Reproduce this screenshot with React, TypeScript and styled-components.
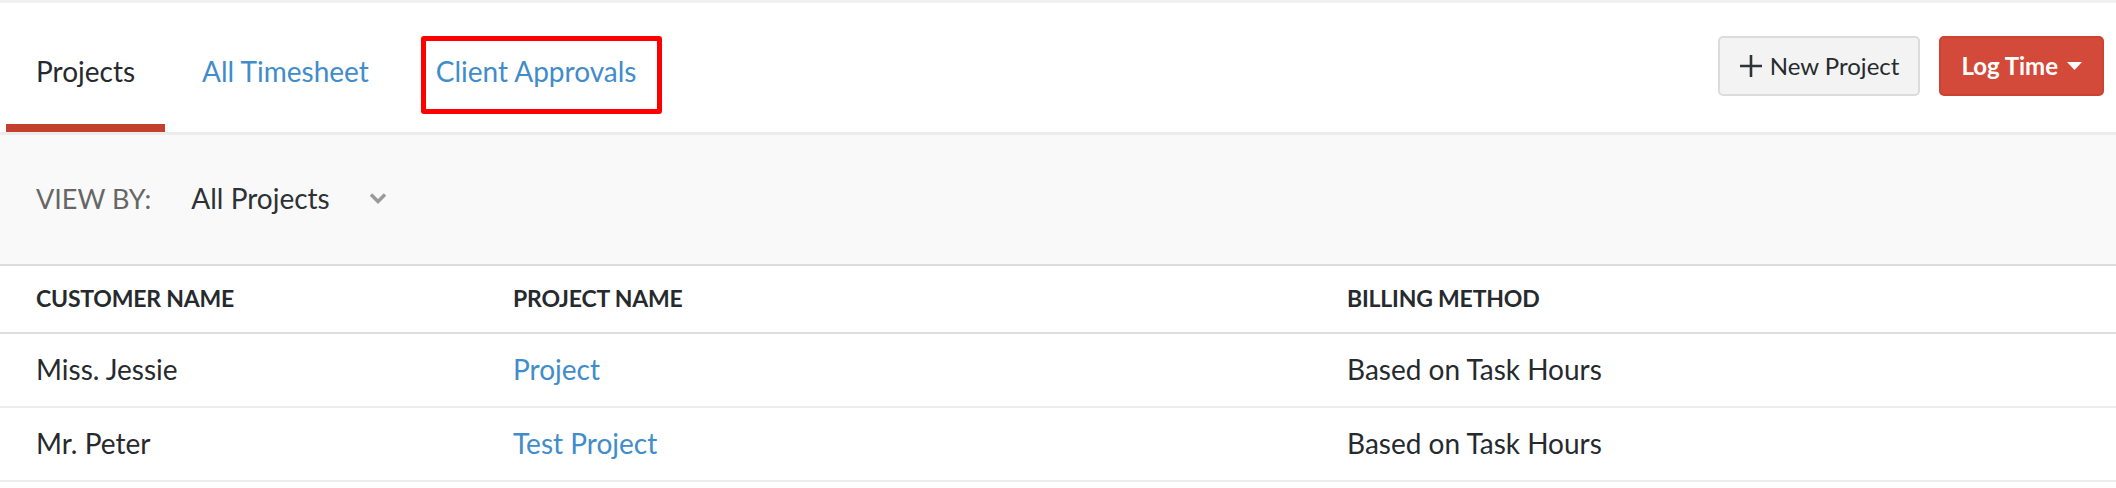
import React from 'react';
import styled, { createGlobalStyle } from 'styled-components';

const GlobalStyle = createGlobalStyle`
  body {
    margin: 0;
    background: #ffffff;
    font-family: Lato, "Open Sans", sans-serif;
    color: #262a2e;
  }
`;

const tabs = [
  { label: 'Projects', active: true, highlighted: false },
  { label: 'All Timesheet', active: false, highlighted: false },
  { label: 'Client Approvals', active: false, highlighted: true },
];

const projects = [
  { id: 1, customer: 'Miss. Jessie', project: 'Project', billing: 'Based on Task Hours' },
  { id: 2, customer: 'Mr. Peter', project: 'Test Project', billing: 'Based on Task Hours' },
];

const PlusIcon = () => (
  <svg width="24" height="24" viewBox="0 0 24 24" fill="none">
    <path d="M12 1v22M1 12h22" stroke="#2f3336" strokeWidth="2.6" />
  </svg>
);

const CaretIcon = () => (
  <svg width="15" height="8" viewBox="0 0 15 8">
    <path d="M0 0h15L7.5 8z" fill="#ffffff" />
  </svg>
);

const ChevronIcon = () => (
  <svg width="18" height="12" viewBox="0 0 18 12" fill="none">
    <path d="M2 2.5l7 7 7-7" stroke="#9a9a9a" strokeWidth="3.4" />
  </svg>
);

export default function App() {
  return (
    <>
      <GlobalStyle />
      <Page>
        <TabBar>
          <Tabs>
            {tabs.map((tab) => (
              <Tab key={tab.label} $active={tab.active}>
                {tab.label}
                {tab.highlighted && <Highlight />}
              </Tab>
            ))}
          </Tabs>
          <Actions>
            <Button>
              <PlusIcon />
              New Project
            </Button>
            <Button $primary>
              Log Time
              <CaretIcon />
            </Button>
          </Actions>
        </TabBar>

        <FilterBar>
          <FilterLabel>VIEW BY:</FilterLabel>
          <FilterSelect>
            All Projects
            <ChevronIcon />
          </FilterSelect>
        </FilterBar>

        <Table>
          <HeaderRow>
            <HeaderCell>CUSTOMER NAME</HeaderCell>
            <HeaderCell>PROJECT NAME</HeaderCell>
            <HeaderCell>BILLING METHOD</HeaderCell>
          </HeaderRow>
          {projects.map((p) => (
            <Row key={p.id}>
              <Cell>{p.customer}</Cell>
              <Cell>
                <ProjectLink href="#">{p.project}</ProjectLink>
              </Cell>
              <Cell>{p.billing}</Cell>
            </Row>
          ))}
        </Table>
      </Page>
    </>
  );
}

// Styled Components Definitions
const Page = styled.div`
  width: 2116px;
  border-top: 3px solid #f1f1f1;
`;

const TabBar = styled.div`
  height: 129px;
  display: flex;
  justify-content: space-between;
  border-bottom: 3px solid #ececec;
`;

const Tabs = styled.div`
  display: flex;
  gap: 7px;
  padding-left: 6px;
`;

const Tab = styled.div<{ $active?: boolean }>`
  position: relative;
  display: flex;
  align-items: center;
  padding: 6px 30px 0;
  font-size: 28px;
  color: ${(p) => (p.$active ? '#262a2e' : '#418cca')};
  box-shadow: ${(p) => (p.$active ? 'inset 0 -8px 0 #c3402e' : 'none')};
  cursor: pointer;
`;

const Highlight = styled.span`
  position: absolute;
  left: 15px;
  right: 4px;
  top: 33px;
  bottom: 18px;
  border: 5px solid #ff0000;
  border-radius: 3px;
`;

const Actions = styled.div`
  display: flex;
  align-items: center;
  gap: 19px;
  padding: 0 12px 4px 0;
`;

const Button = styled.button<{ $primary?: boolean }>`
  height: 60px;
  display: flex;
  align-items: center;
  gap: ${(p) => (p.$primary ? '9px' : '7px')};
  padding: 0 ${(p) => (p.$primary ? '20px' : '19px')};
  font-family: Lato, "Open Sans", sans-serif;
  font-size: 24px;
  font-weight: ${(p) => (p.$primary ? 700 : 400)};
  color: ${(p) => (p.$primary ? '#ffffff' : '#262a2e')};
  background: ${(p) => (p.$primary ? '#d44a3a' : '#f3f3f3')};
  border: 2px solid ${(p) => (p.$primary ? '#cc4334' : '#dcdcdc')};
  border-radius: 5px;
  cursor: pointer;
`;

const FilterBar = styled.div`
  height: 126px;
  display: flex;
  align-items: center;
  padding: 0 0 3px 36px;
  background: #f9f9f9;
  border-bottom: 2px solid #dcdcdc;
`;

const FilterLabel = styled.span`
  font-size: 27px;
  color: #666666;
  margin-right: 40px;
`;

const FilterSelect = styled.div`
  display: flex;
  align-items: center;
  gap: 39px;
  font-size: 28px;
  color: #2e3236;
`;

const Table = styled.div`
  display: flex;
  flex-direction: column;
`;

const HeaderRow = styled.div`
  display: grid;
  grid-template-columns: 477px 834px 1fr;
  height: 63px;
  padding-bottom: 3px;
  align-items: center;
  border-bottom: 2px solid #dedede;
`;

const HeaderCell = styled.div`
  padding-left: 36px;
  font-size: 23px;
  font-weight: 700;
  letter-spacing: -0.2px;
  color: #262a2e;
`;

const Row = styled.div`
  display: grid;
  grid-template-columns: 477px 834px 1fr;
  height: 70px;
  padding-bottom: 2px;
  align-items: center;
  border-bottom: 2px solid #ececec;
`;

const Cell = styled.div`
  padding-left: 36px;
  font-size: 28px;
  color: #262a2e;
`;

const ProjectLink = styled.a`
  color: #418cca;
  text-decoration: none;
`;
